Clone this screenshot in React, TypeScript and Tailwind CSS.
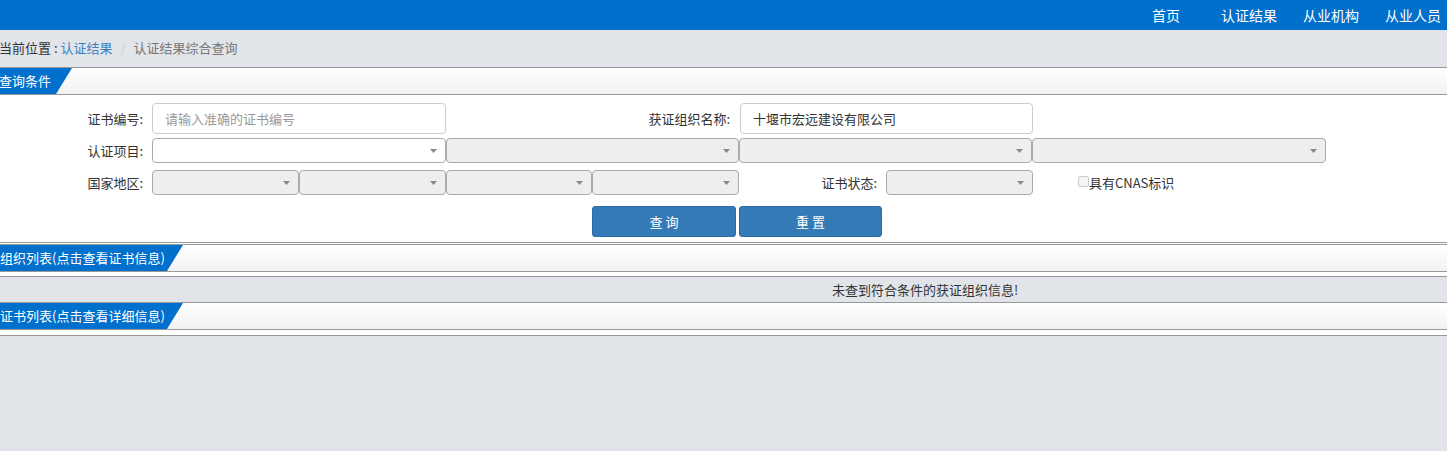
import React from 'react';

const font = { fontFamily: '"Noto Sans CJK SC", "Liberation Sans", sans-serif' };

function Caret() {
  return (
    <svg width="7" height="4" viewBox="0 0 7 4" className="shrink-0">
      <path d="M0 0h7L3.5 4z" fill="#888" />
    </svg>
  );
}

function Select({ w, white }: { w: string; white?: boolean }) {
  return (
    <div
      className={`${w} h-[25px] flex items-center justify-end pr-[8px] border border-[#aaa] rounded-[4px] ${
        white ? 'bg-white' : 'bg-[#eeeeee]'
      }`}
    >
      <Caret />
    </div>
  );
}

function SectionHeader({ title, tab }: { title: string; tab: string }) {
  return (
    <div className="h-[28px] flex border-t border-b border-[#999] bg-gradient-to-b from-white to-[#f2f2f2]">
      <div
        className={`${tab} h-full bg-[#0070cc] text-white text-[13px] leading-[26px] whitespace-nowrap overflow-hidden`}
        style={{ clipPath: 'polygon(0 0, 100% 0, calc(100% - 16px) 100%, 0 100%)' }}
      >
        {title}
      </div>
    </div>
  );
}

export default function App() {
  return (
    <div className="w-[1447px] h-[451px] bg-[#e1e5ea] text-[#333] overflow-hidden" style={font}>
      <div className="h-[30px] bg-[#0070cc] flex justify-end items-center text-white text-[14px] pr-[6px]">
        <span className="mr-[41px]">首页</span>
        <span className="mr-[26px]">认证结果</span>
        <span className="mr-[26px]">从业机构</span>
        <span>从业人员</span>
      </div>

      <div className="h-[37px] flex items-center text-[13px] -ml-[1px] pb-[2px]">
        <span className="text-[#333]">当前位置 :&nbsp;</span>
        <span className="text-[#3f7fc0]">认证结果</span>
        <span className="text-[#ccc] px-[8px]">/</span>
        <span className="text-[#777]">认证结果综合查询</span>
      </div>

      <SectionHeader title="查询条件" tab="w-[73px] -ml-[1px]" />

      <div className="bg-white h-[148px] border-b border-[#999] pt-[8px] text-[13px]">
        <div className="flex items-center h-[31px]">
          <div className="w-[143px] text-right">证书编号:</div>
          <div className="ml-[9px] w-[294px] h-[31px] border border-[#ccc] rounded-[4px] flex items-center pl-[12px] text-[#999]">
            请输入准确的证书编号
          </div>
          <div className="w-[284px] text-right">获证组织名称:</div>
          <div className="ml-[10px] w-[293px] h-[31px] border border-[#ccc] rounded-[4px] flex items-center pl-[12px] text-[#333]">
            十堰市宏远建设有限公司
          </div>
        </div>
        <div className="flex items-center h-[25px] mt-[4px]">
          <div className="w-[143px] text-right">认证项目:</div>
          <div className="ml-[9px] flex">
            <Select w="w-[294px]" white />
            <Select w="w-[293px]" />
            <Select w="w-[293px]" />
            <Select w="w-[294px]" />
          </div>
        </div>
        <div className="flex items-center h-[25px] mt-[7px]">
          <div className="w-[143px] text-right">国家地区:</div>
          <div className="ml-[9px] flex">
            <Select w="w-[147px]" />
            <Select w="w-[147px]" />
            <Select w="w-[146px]" />
            <Select w="w-[147px]" />
          </div>
          <div className="w-[138px] text-right">证书状态:</div>
          <div className="ml-[9px] flex">
            <Select w="w-[147px]" />
          </div>
          <div className="ml-[45px] flex items-center">
            <div className="w-[11px] h-[11px] border border-[#ccc] rounded-[2px] bg-[#f5f5f5] mt-[-3px]" />
            <span>具有CNAS标识</span>
          </div>
        </div>
        <div className="flex mt-[11px] pl-[592px] gap-[3px]">
          <div className="w-[144px] h-[31px] bg-[#337ab7] border border-[#2e6da4] rounded-[3px] text-white flex items-center justify-center tracking-[3px] pl-[3px]">
            查询
          </div>
          <div className="w-[143px] h-[31px] bg-[#337ab7] border border-[#2e6da4] rounded-[3px] text-white flex items-center justify-center tracking-[3px] pl-[3px]">
            重置
          </div>
        </div>
      </div>

      <div className="h-[1px] bg-white" />
      <SectionHeader title="组织列表(点击查看证书信息)" tab="w-[183px]" />
      <div className="h-[4px] bg-white" />
      <div className="h-[26px] border-t border-[#999] flex items-center pl-[832px] text-[13px]">
        未查到符合条件的获证组织信息!
      </div>
      <SectionHeader title="证书列表(点击查看详细信息)" tab="w-[183px]" />
      <div className="h-[5px] bg-white" />
      <div className="border-t border-[#999]" />
    </div>
  );
}
